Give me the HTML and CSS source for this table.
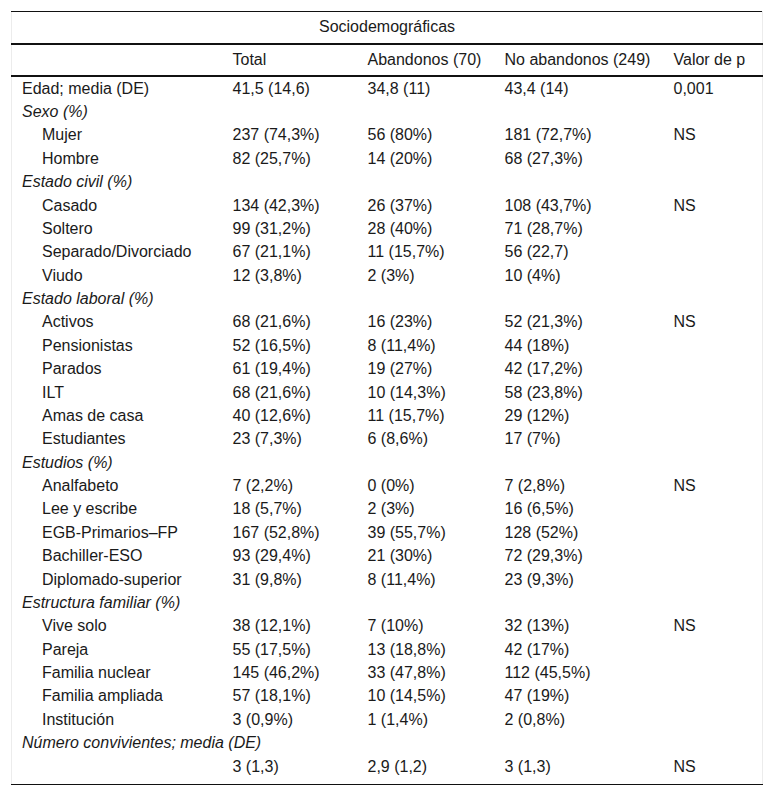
FILE: index.html
```html
<!DOCTYPE html>
<html lang="es">
<head>
<meta charset="utf-8">
<link rel="stylesheet" href="styles.css">
</head>
<body>
<div class="wrap">
<table class="tbl">
<colgroup>
<col class="c1"><col class="c2"><col class="c3"><col class="c4"><col class="c5">
</colgroup>
<thead>
<tr class="title-row"><th colspan="5" class="title">Sociodemográficas</th></tr>
<tr class="head-row"><th></th><th>Total</th><th>Abandonos (70)</th><th>No abandonos (249)</th><th>Valor de p</th></tr>
</thead>
<tbody>
<tr><td>Edad; media (DE)</td><td>41,5 (14,6)</td><td>34,8 (11)</td><td>43,4 (14)</td><td>0,001</td></tr>
<tr><td class="cat" colspan="5">Sexo (%)</td></tr>
<tr><td class="sub">Mujer</td><td>237 (74,3%)</td><td>56 (80%)</td><td>181 (72,7%)</td><td>NS</td></tr>
<tr><td class="sub">Hombre</td><td>82 (25,7%)</td><td>14 (20%)</td><td>68 (27,3%)</td><td></td></tr>
<tr><td class="cat" colspan="5">Estado civil (%)</td></tr>
<tr><td class="sub">Casado</td><td>134 (42,3%)</td><td>26 (37%)</td><td>108 (43,7%)</td><td>NS</td></tr>
<tr><td class="sub">Soltero</td><td>99 (31,2%)</td><td>28 (40%)</td><td>71 (28,7%)</td><td></td></tr>
<tr><td class="sub">Separado/Divorciado</td><td>67 (21,1%)</td><td>11 (15,7%)</td><td>56 (22,7)</td><td></td></tr>
<tr><td class="sub">Viudo</td><td>12 (3,8%)</td><td>2 (3%)</td><td>10 (4%)</td><td></td></tr>
<tr><td class="cat" colspan="5">Estado laboral (%)</td></tr>
<tr><td class="sub">Activos</td><td>68 (21,6%)</td><td>16 (23%)</td><td>52 (21,3%)</td><td>NS</td></tr>
<tr><td class="sub">Pensionistas</td><td>52 (16,5%)</td><td>8 (11,4%)</td><td>44 (18%)</td><td></td></tr>
<tr><td class="sub">Parados</td><td>61 (19,4%)</td><td>19 (27%)</td><td>42 (17,2%)</td><td></td></tr>
<tr><td class="sub">ILT</td><td>68 (21,6%)</td><td>10 (14,3%)</td><td>58 (23,8%)</td><td></td></tr>
<tr><td class="sub">Amas de casa</td><td>40 (12,6%)</td><td>11 (15,7%)</td><td>29 (12%)</td><td></td></tr>
<tr><td class="sub">Estudiantes</td><td>23 (7,3%)</td><td>6 (8,6%)</td><td>17 (7%)</td><td></td></tr>
<tr><td class="cat" colspan="5">Estudios (%)</td></tr>
<tr><td class="sub">Analfabeto</td><td>7 (2,2%)</td><td>0 (0%)</td><td>7 (2,8%)</td><td>NS</td></tr>
<tr><td class="sub">Lee y escribe</td><td>18 (5,7%)</td><td>2 (3%)</td><td>16 (6,5%)</td><td></td></tr>
<tr><td class="sub">EGB-Primarios–FP</td><td>167 (52,8%)</td><td>39 (55,7%)</td><td>128 (52%)</td><td></td></tr>
<tr><td class="sub">Bachiller-ESO</td><td>93 (29,4%)</td><td>21 (30%)</td><td>72 (29,3%)</td><td></td></tr>
<tr><td class="sub">Diplomado-superior</td><td>31 (9,8%)</td><td>8 (11,4%)</td><td>23 (9,3%)</td><td></td></tr>
<tr><td class="cat" colspan="5">Estructura familiar (%)</td></tr>
<tr><td class="sub">Vive solo</td><td>38 (12,1%)</td><td>7 (10%)</td><td>32 (13%)</td><td>NS</td></tr>
<tr><td class="sub">Pareja</td><td>55 (17,5%)</td><td>13 (18,8%)</td><td>42 (17%)</td><td></td></tr>
<tr><td class="sub">Familia nuclear</td><td>145 (46,2%)</td><td>33 (47,8%)</td><td>112 (45,5%)</td><td></td></tr>
<tr><td class="sub">Familia ampliada</td><td>57 (18,1%)</td><td>10 (14,5%)</td><td>47 (19%)</td><td></td></tr>
<tr><td class="sub">Institución</td><td>3 (0,9%)</td><td>1 (1,4%)</td><td>2 (0,8%)</td><td></td></tr>
<tr><td class="cat" colspan="5">Número convivientes; media (DE)</td></tr>
<tr class="last"><td></td><td>3 (1,3)</td><td>2,9 (1,2)</td><td>3 (1,3)</td><td>NS</td></tr>
</tbody>
</table>
</div>
</body>
</html>
```

FILE: styles.css
```css
html, body {
  margin: 0;
  padding: 0;
  background: #ffffff;
}

.wrap {
  padding: 11px 10px 0 11px;
}

.tbl {
  width: 751px;
  border-collapse: collapse;
  table-layout: fixed;
  font-family: "Liberation Sans", Arial, sans-serif;
  font-size: 16px;
  color: #1a1a1a;
  border-left: 1px solid #ececec;
  border-right: 1px solid #ececec;
  border-top: 1px solid #111;
  border-bottom: 1px solid #111;
}

.c1 { width: 211px; }
.c2 { width: 135px; }
.c3 { width: 137px; }
.c4 { width: 169px; }
.c5 { width: 99px; }

.tbl th, .tbl td {
  text-align: left;
  font-weight: normal;
  white-space: nowrap;
}

.tbl th {
  padding: 6px 0 6px 10px;
  line-height: 18px;
}

.title-row th {
  padding: 6px 0 7px 0;
  text-align: center;
  border-bottom: 2px solid #111;
}

.head-row th {
  border-bottom: 2px solid #111;
}

.tbl td {
  padding: 2.7px 0 2.7px 10px;
  line-height: 18px;
}

.tbl td.cat {
  font-style: italic;
}

.tbl td.sub {
  padding-left: 30px;
}

.tbl tr.last td {
  padding-bottom: 8.3px;
}
```
